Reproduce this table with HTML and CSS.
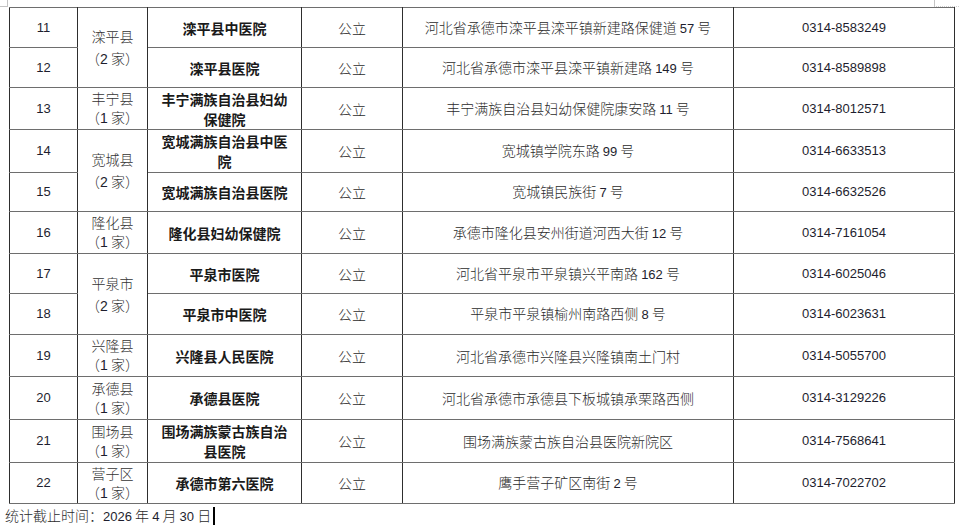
FILE: index.html
```html
<!DOCTYPE html>
<html lang="zh-CN">
<head>
<meta charset="utf-8">
<title>医疗机构名单</title>
<link rel="stylesheet" href="styles.css">
</head>
<body>
<div class="mark mark-tl"></div>
<div class="mark mark-tr"></div>
<table class="list">
  <colgroup>
    <col class="c1"><col class="c2"><col class="c3"><col class="c4"><col class="c5"><col class="c6">
  </colgroup>
  <tbody>
    <tr class="r1">
      <td class="n">11</td>
      <td class="county span" rowspan="2">滦平县<br>（<span class="n">2</span> 家）</td>
      <td class="name">滦平县中医院</td>
      <td>公立</td>
      <td>河北省承德市滦平县滦平镇新建路保健道 <span class="n">57</span> 号</td>
      <td class="n">0314-8583249</td>
    </tr>
    <tr class="r2">
      <td class="n">12</td>
      <td class="name">滦平县医院</td>
      <td>公立</td>
      <td>河北省承德市滦平县滦平镇新建路 <span class="n">149</span> 号</td>
      <td class="n">0314-8589898</td>
    </tr>
    <tr class="r3">
      <td class="n">13</td>
      <td class="county">丰宁县<br>（<span class="n">1</span> 家）</td>
      <td class="name">丰宁满族自治县妇幼保健院</td>
      <td>公立</td>
      <td>丰宁满族自治县妇幼保健院康安路 <span class="n">11</span> 号</td>
      <td class="n">0314-8012571</td>
    </tr>
    <tr class="r4">
      <td class="n">14</td>
      <td class="county span" rowspan="2">宽城县<br>（<span class="n">2</span> 家）</td>
      <td class="name">宽城满族自治县中医院</td>
      <td>公立</td>
      <td>宽城镇学院东路 <span class="n">99</span> 号</td>
      <td class="n">0314-6633513</td>
    </tr>
    <tr class="r5">
      <td class="n">15</td>
      <td class="name">宽城满族自治县医院</td>
      <td>公立</td>
      <td>宽城镇民族街 <span class="n">7</span> 号</td>
      <td class="n">0314-6632526</td>
    </tr>
    <tr class="r6">
      <td class="n">16</td>
      <td class="county">隆化县<br>（<span class="n">1</span> 家）</td>
      <td class="name">隆化县妇幼保健院</td>
      <td>公立</td>
      <td>承德市隆化县安州街道河西大街 <span class="n">12</span> 号</td>
      <td class="n">0314-7161054</td>
    </tr>
    <tr class="r7">
      <td class="n">17</td>
      <td class="county span" rowspan="2">平泉市<br>（<span class="n">2</span> 家）</td>
      <td class="name">平泉市医院</td>
      <td>公立</td>
      <td>河北省平泉市平泉镇兴平南路 <span class="n">162</span> 号</td>
      <td class="n">0314-6025046</td>
    </tr>
    <tr class="r8">
      <td class="n">18</td>
      <td class="name">平泉市中医院</td>
      <td>公立</td>
      <td>平泉市平泉镇榆州南路西侧 <span class="n">8</span> 号</td>
      <td class="n">0314-6023631</td>
    </tr>
    <tr class="r9">
      <td class="n">19</td>
      <td class="county">兴隆县<br>（<span class="n">1</span> 家）</td>
      <td class="name">兴隆县人民医院</td>
      <td>公立</td>
      <td>河北省承德市兴隆县兴隆镇南土门村</td>
      <td class="n">0314-5055700</td>
    </tr>
    <tr class="r10">
      <td class="n">20</td>
      <td class="county">承德县<br>（<span class="n">1</span> 家）</td>
      <td class="name">承德县医院</td>
      <td>公立</td>
      <td>河北省承德市承德县下板城镇承栗路西侧</td>
      <td class="n">0314-3129226</td>
    </tr>
    <tr class="r11">
      <td class="n">21</td>
      <td class="county">围场县<br>（<span class="n">1</span> 家）</td>
      <td class="name">围场满族蒙古族自治县医院</td>
      <td>公立</td>
      <td>围场满族蒙古族自治县医院新院区</td>
      <td class="n">0314-7568641</td>
    </tr>
    <tr class="r12">
      <td class="n">22</td>
      <td class="county">营子区<br>（<span class="n">1</span> 家）</td>
      <td class="name">承德市第六医院</td>
      <td>公立</td>
      <td>鹰手营子矿区南街 <span class="n">2</span> 号</td>
      <td class="n">0314-7022702</td>
    </tr>
  </tbody>
</table>
<p class="note">统计截止时间：<span class="n">2026</span> 年 <span class="n">4</span> 月 <span class="n">30</span> 日<span class="caret"></span></p>
</body>
</html>
```
FILE: styles.css
```css
html, body {
  margin: 0;
  padding: 0;
  background: #ffffff;
  width: 960px;
  height: 527px;
  overflow: hidden;
}

body {
  position: relative;
  font-family: "Noto Sans CJK SC", sans-serif;
  font-size: 14px;
  font-weight: 300;
  color: #2b2b2b;
  text-spacing-trim: space-all;
}

.mark {
  position: absolute;
  top: 0;
  height: 6px;
  border-color: #c4c4c4;
  border-style: solid;
  border-width: 0;
}

.mark-tl {
  left: 0;
  width: 7px;
  border-right-width: 1px;
  border-bottom-width: 1px;
}

.mark-tr {
  left: 934px;
  width: 24px;
  border-left-width: 1px;
  border-bottom: 1px dotted #cfcfcf;
}

.list {
  border-collapse: collapse;
  table-layout: fixed;
  margin: 7px 0 0 9px;
  width: 945px;
}

.c1 { width: 68px; }
.c2 { width: 70px; }
.c3 { width: 154px; }
.c4 { width: 101px; }
.c5 { width: 331px; }
.c6 { width: 221px; }

.list td {
  border-left: 1px solid #2e2e2e;
  border-right: 1px solid #2e2e2e;
  border-top: 1px solid #6e6e6e;
  border-bottom: 1px solid #6e6e6e;
  padding: 0 8px;
  text-align: center;
  vertical-align: middle;
  line-height: 20px;
  white-space: normal;
}

.list td.name {
  font-weight: 700;
  color: #1a1a1a;
  line-height: 20px;
}

.list td.county {
  color: #333333;
  padding: 0 2px;
  line-height: 19px;
}

.list td.county.span {
  line-height: 22px;
}

.county .n {
  font-size: 14px;
}

.n {
  font-family: "Liberation Sans", "Noto Sans CJK SC", sans-serif;
  font-size: 13px;
  font-weight: 400;
  color: #1e1e2e;
}

.r1 td { height: 39px; }
.r2 td { height: 39px; }
.r3 td { height: 41px; }
.r4 td { height: 42px; }
.r5 td { height: 38px; }
.r6 td { height: 41px; }
.r7 td { height: 39px; }
.r8 td { height: 40px; }
.r9 td { height: 41px; }
.r10 td { height: 42px; }
.r11 td { height: 42px; }
.r12 td { height: 40px; }

.note {
  margin: 1px 0 0;
  padding-left: 5px;
  line-height: 20px;
  font-size: 14px;
  color: #2b2b2b;
}

.caret {
  display: inline-block;
  width: 2px;
  height: 18px;
  margin-left: 2px;
  background: #000000;
  vertical-align: -4px;
}
```
